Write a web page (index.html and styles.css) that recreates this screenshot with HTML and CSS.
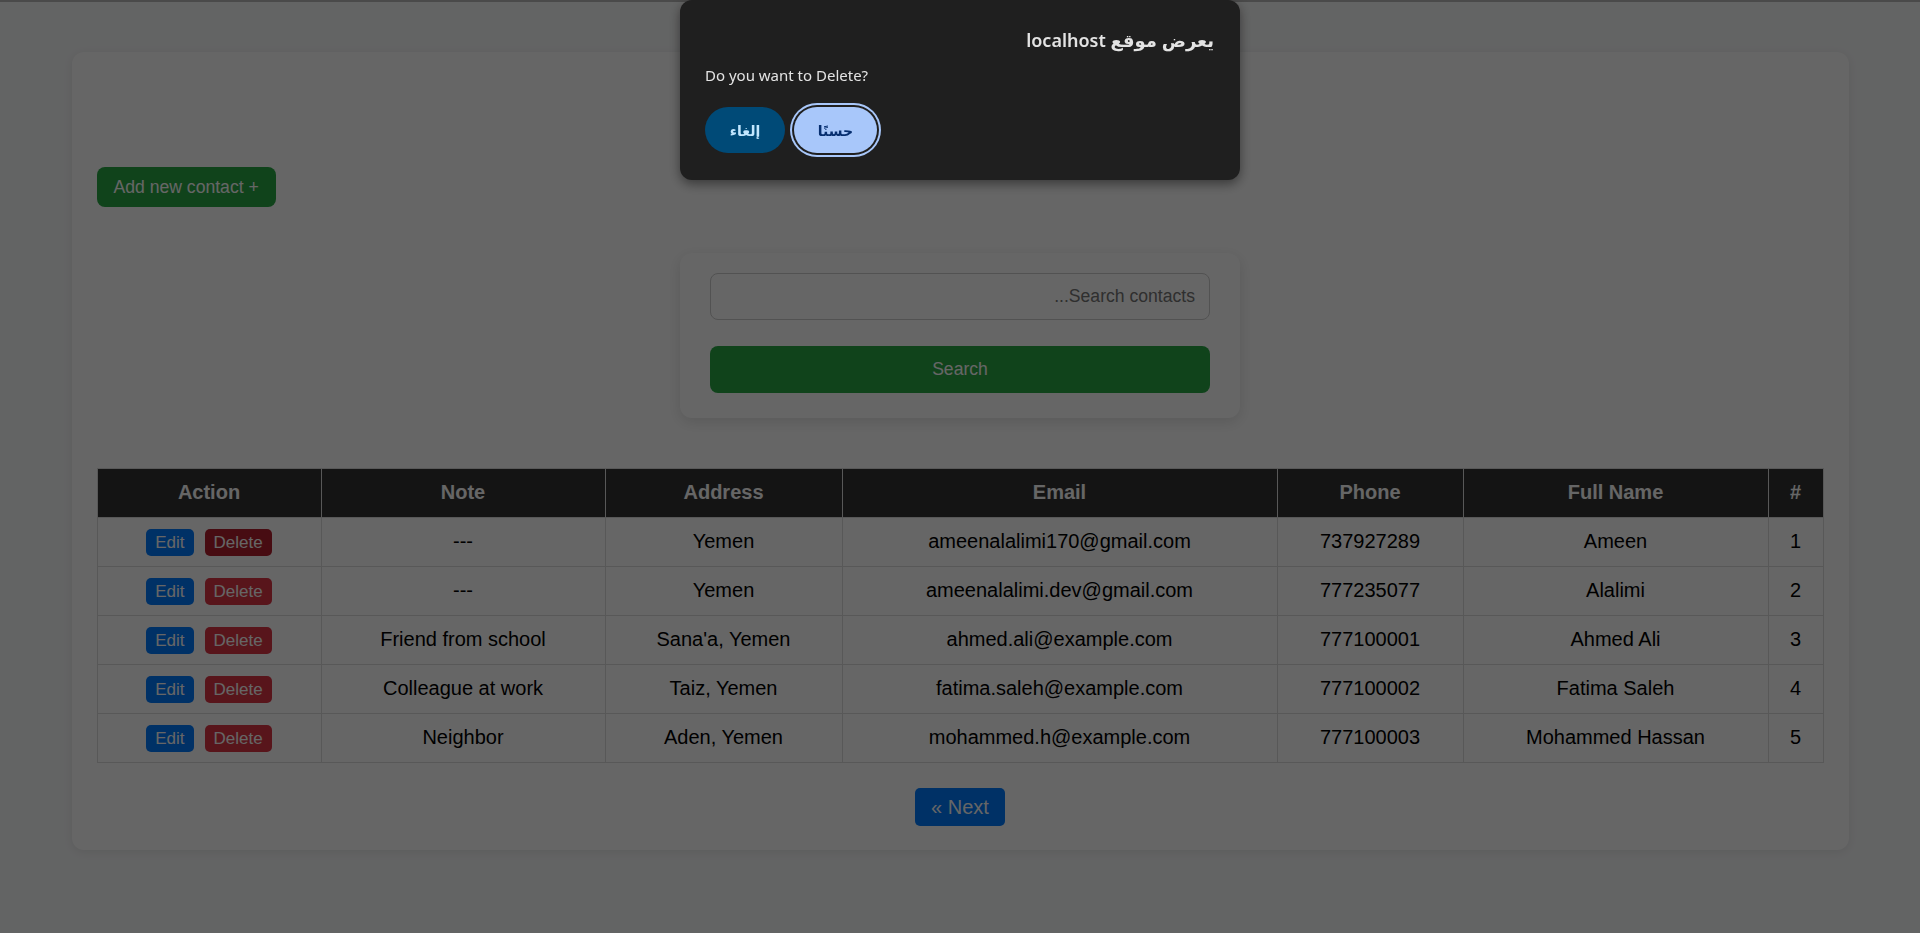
FILE: index.html
```html
<!DOCTYPE html>
<html lang="ar" dir="rtl">
<head>
<meta charset="utf-8">
<title>Contacts</title>
<link rel="stylesheet" href="styles.css">
</head>
<body>
<div class="page-edge"></div>
<main class="container">
  <div class="toolbar">
    <a class="btn-add" href="#">+ Add new contact</a>
  </div>

  <form class="search-card">
    <input class="search-input" type="text" placeholder="Search contacts...">
    <button class="btn-search" type="button">Search</button>
  </form>

  <table class="contacts">
    <colgroup>
      <col class="c-num">
      <col class="c-name">
      <col class="c-phone">
      <col class="c-email">
      <col class="c-address">
      <col class="c-note">
      <col class="c-action">
    </colgroup>
    <thead>
      <tr>
        <th>#</th>
        <th>Full Name</th>
        <th>Phone</th>
        <th>Email</th>
        <th>Address</th>
        <th>Note</th>
        <th>Action</th>
      </tr>
    </thead>
    <tbody>
      <tr>
        <td>1</td>
        <td>Ameen</td>
        <td>737927289</td>
        <td>ameenalalimi170@gmail.com</td>
        <td>Yemen</td>
        <td>---</td>
        <td class="actions"><div class="action-group"><button class="btn-sm btn-delete btn-delete--active" type="button">Delete</button><button class="btn-sm btn-edit" type="button">Edit</button></div></td>
      </tr>
      <tr>
        <td>2</td>
        <td>Alalimi</td>
        <td>777235077</td>
        <td>ameenalalimi.dev@gmail.com</td>
        <td>Yemen</td>
        <td>---</td>
        <td class="actions"><div class="action-group"><button class="btn-sm btn-delete" type="button">Delete</button><button class="btn-sm btn-edit" type="button">Edit</button></div></td>
      </tr>
      <tr>
        <td>3</td>
        <td>Ahmed Ali</td>
        <td>777100001</td>
        <td>ahmed.ali@example.com</td>
        <td>Sana'a, Yemen</td>
        <td>Friend from school</td>
        <td class="actions"><div class="action-group"><button class="btn-sm btn-delete" type="button">Delete</button><button class="btn-sm btn-edit" type="button">Edit</button></div></td>
      </tr>
      <tr>
        <td>4</td>
        <td>Fatima Saleh</td>
        <td>777100002</td>
        <td>fatima.saleh@example.com</td>
        <td>Taiz, Yemen</td>
        <td>Colleague at work</td>
        <td class="actions"><div class="action-group"><button class="btn-sm btn-delete" type="button">Delete</button><button class="btn-sm btn-edit" type="button">Edit</button></div></td>
      </tr>
      <tr>
        <td>5</td>
        <td>Mohammed Hassan</td>
        <td>777100003</td>
        <td>mohammed.h@example.com</td>
        <td>Aden, Yemen</td>
        <td>Neighbor</td>
        <td class="actions"><div class="action-group"><button class="btn-sm btn-delete" type="button">Delete</button><button class="btn-sm btn-edit" type="button">Edit</button></div></td>
      </tr>
    </tbody>
  </table>

  <div class="pager">
    <a class="btn-next" href="#">Next »</a>
  </div>
</main>

<div class="overlay"></div>

<div class="dialog" role="alertdialog">
  <div class="dialog-title">يعرض موقع localhost</div>
  <div class="dialog-message" dir="ltr">Do you want to Delete?</div>
  <div class="dialog-buttons">
    <button class="dlg-btn dlg-ok" type="button">حسنًا</button>
    <button class="dlg-btn dlg-cancel" type="button">إلغاء</button>
  </div>
</div>
</body>
</html>
```

FILE: styles.css
```css
* {
  box-sizing: border-box;
}

html,
body {
  margin: 0;
  padding: 0;
}

body {
  background: #f8f9fa;
  font-family: "Liberation Sans", Arial, sans-serif;
  color: #000;
  height: 933px;
  overflow: hidden;
}

.page-edge {
  position: fixed;
  top: 0;
  left: 0;
  right: 0;
  height: 2px;
  background: #4a4a4a;
  z-index: 2;
}

.container {
  max-width: 1777px;
  margin: 52px auto 0;
  background: #fff;
  border-radius: 12px;
  padding: 25px 25px 24px;
  box-shadow: 0 2px 10px rgba(0, 0, 0, 0.08);
}

.toolbar {
  display: flex;
  justify-content: flex-end;
  padding-top: 90px;
}

.btn-add {
  display: inline-block;
  background: #28a745;
  color: #fff;
  text-decoration: none;
  font-size: 17.6px;
  line-height: 20px;
  padding: 10px 17px;
  border-radius: 8px;
}

.search-card {
  width: 560px;
  margin: 46px auto 0;
  padding: 20px 30px 25px;
  background: #fff;
  border-radius: 12px;
  box-shadow: 0 4px 14px rgba(0, 0, 0, 0.12);
  display: flex;
  flex-direction: column;
  gap: 26px;
}

.search-input {
  height: 47px;
  width: 100%;
  border: 1px solid #ccc;
  border-radius: 8px;
  padding: 0 14px;
  font-family: "Liberation Sans", Arial, sans-serif;
  font-size: 17.6px;
  color: #000;
  background: #fff;
}

.search-input::placeholder {
  color: #757575;
}

.btn-search {
  height: 47px;
  width: 100%;
  border: 0;
  border-radius: 8px;
  background: #28a745;
  color: #fff;
  font-family: "Liberation Sans", Arial, sans-serif;
  font-size: 17.6px;
}

.contacts {
  width: 100%;
  margin-top: 50px;
  border-collapse: collapse;
  table-layout: fixed;
}

.c-num { width: 55px; }
.c-name { width: 305px; }
.c-phone { width: 186px; }
.c-email { width: 435px; }
.c-address { width: 237px; }
.c-note { width: 284px; }
.c-action { width: 224px; }

.contacts th,
.contacts td {
  border: 1px solid #ddd;
  padding: 11px 8px 13px;
  text-align: center;
  font-size: 20px;
  line-height: 24px;
  vertical-align: middle;
  white-space: nowrap;
}

.contacts th {
  background: #333;
  color: #fff;
  font-weight: bold;
}

.contacts td.actions {
  padding-top: 0;
  padding-bottom: 0;
}

.action-group {
  display: inline-flex;
  gap: 11px;
  vertical-align: middle;
}

.btn-sm {
  display: inline-block;
  border: 0;
  border-radius: 5px;
  padding: 4px 9px;
  font-family: "Liberation Sans", Arial, sans-serif;
  font-size: 17px;
  line-height: 19px;
  color: #fff;
}

.btn-edit {
  background: #007bff;
}

.btn-delete {
  background: #dc3545;
}

.btn-delete--active {
  background: #b21f2d;
}

.pager {
  display: flex;
  justify-content: center;
  margin-top: 25px;
}

.btn-next {
  display: inline-block;
  background: #007bff;
  color: #fff;
  text-decoration: none;
  font-size: 20px;
  line-height: 22px;
  padding: 8px 16px;
  border-radius: 5px;
}

.overlay {
  position: fixed;
  inset: 0;
  background: rgba(0, 0, 0, 0.6);
  z-index: 1;
}

.dialog {
  position: fixed;
  top: 0;
  left: calc(50% - 280px);
  width: 560px;
  height: 180px;
  background: #1f1f1f;
  border-radius: 12px;
  box-shadow: 0 4px 12px rgba(0, 0, 0, 0.45);
  padding: 27px 26px 25px 25px;
  z-index: 3;
  font-family: "Noto Sans", "DejaVu Sans", sans-serif;
  color: #e3e3e3;
}

.dialog-title {
  font-size: 18px;
  line-height: 26px;
  font-weight: 600;
  text-align: right;
}

.dialog-message {
  margin-top: 12px;
  font-size: 15px;
  line-height: 20px;
  text-align: left;
}

.dialog-buttons {
  display: flex;
  justify-content: flex-end;
  gap: 9px;
  margin-top: 22px;
}

.dlg-btn {
  height: 46px;
  border: 0;
  border-radius: 999px;
  font-family: "Noto Sans", "DejaVu Sans", sans-serif;
  font-size: 14px;
  font-weight: 600;
}

.dlg-ok {
  width: 83px;
  background: #a8c7fa;
  color: #062e6f;
  box-shadow: 0 0 0 2px #1f1f1f, 0 0 0 4px #a8c7fa;
}

.dlg-cancel {
  width: 80px;
  background: #004a77;
  color: #c2e7ff;
}
```
